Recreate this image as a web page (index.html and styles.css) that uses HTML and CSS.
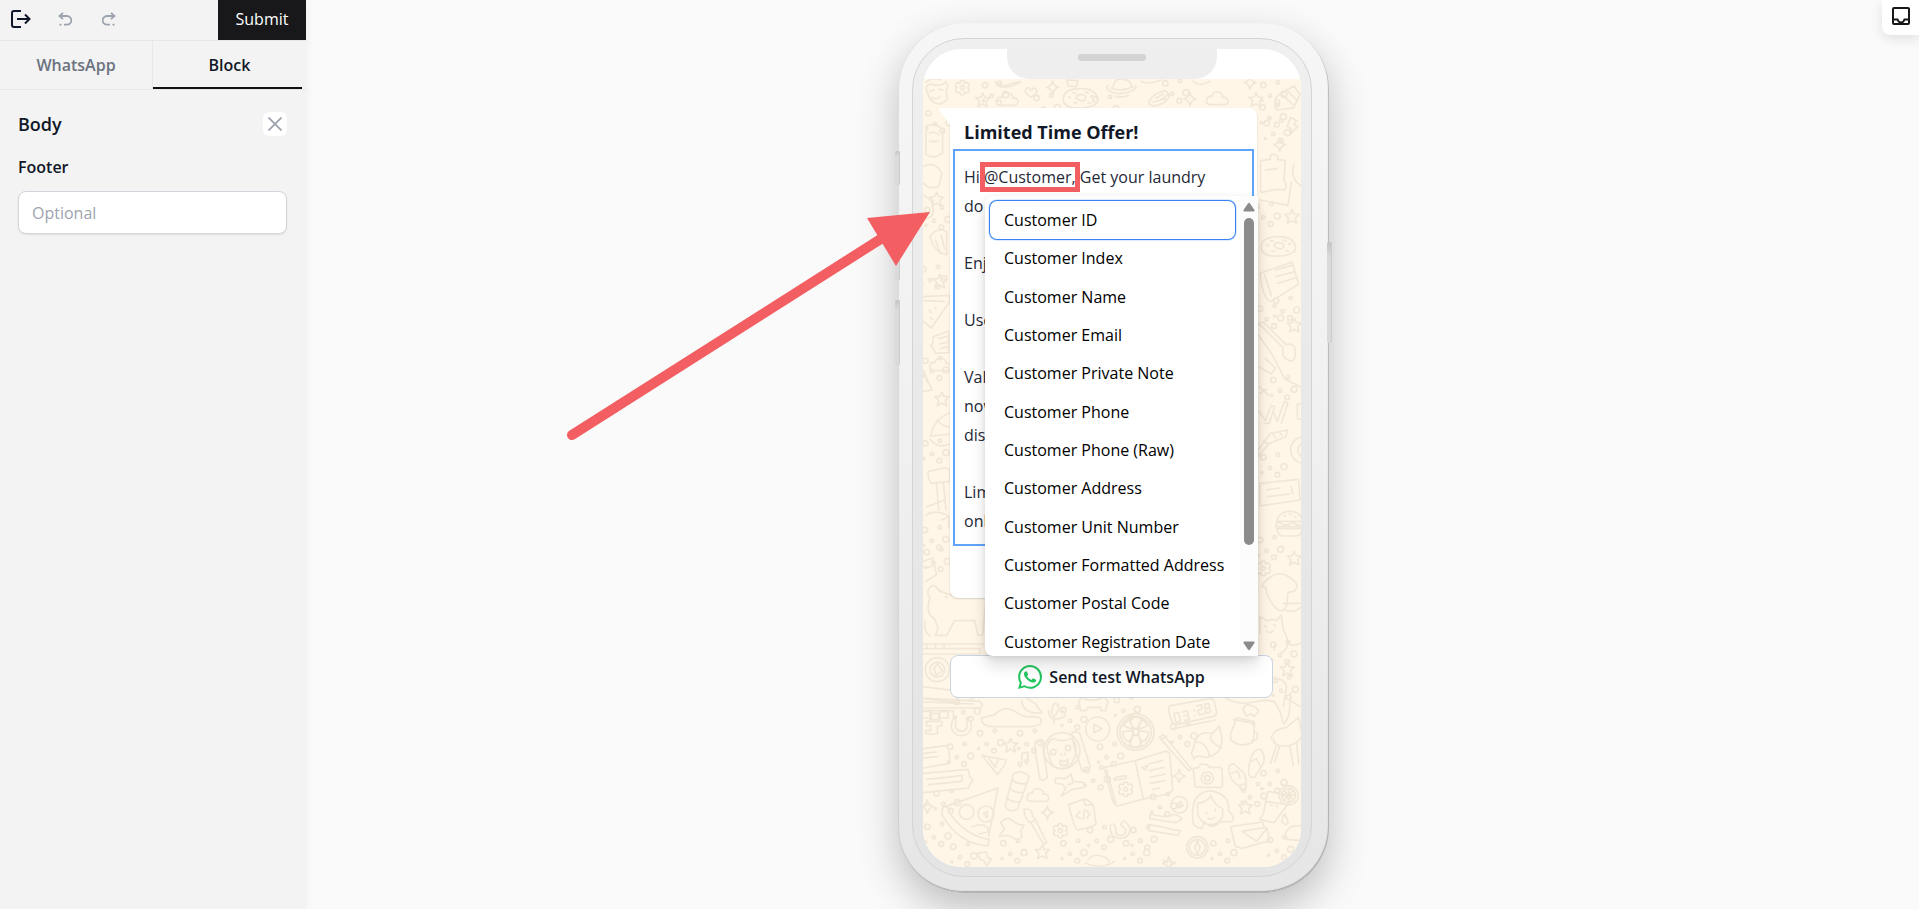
FILE: index.html
```html
<!DOCTYPE html>
<html lang="en">
<head>
    <meta charset="UTF-8">
    <meta name="viewport" content="width=device-width, initial-scale=1.0">
    <title>WhatsApp Template Editor</title>
    <link rel="stylesheet" href="styles.css">
</head>
<body>
    <aside class="sidebar">
        <div class="toolbar">
            <button class="icon-btn exit" aria-label="Exit">
                <svg width="20" height="18" viewBox="0 0 20 18" fill="none" stroke="currentColor" stroke-width="2"><path d="M10 1H3Q1 1 1 3v12q0 2 2 2h7M6 9h12M14 4.500l4.500 4.500-4.500 4.500"/></svg>
            </button>
            <button class="icon-btn" aria-label="Undo" disabled>
                <svg width="14" height="14" viewBox="0 0 14 14" fill="none" stroke="currentColor" stroke-width="1.800"><path d="M5 .8L1.500 4 5 7.200M1.500 4H9a4.300 4.300 0 0 1 0 8.700H6"/><path d="M1.500 12.700h2"/></svg>
            </button>
            <button class="icon-btn" aria-label="Redo" disabled>
                <svg width="14" height="14" viewBox="0 0 14 14" fill="none" stroke="currentColor" stroke-width="1.800"><path d="M9 .8L12.500 4 9 7.200M12.500 4H5a4.300 4.300 0 0 0 0 8.700h3"/><path d="M10.500 12.700h2"/></svg>
            </button>
            <button class="submit">Submit</button>
        </div>
        <nav class="tabs">
            <button class="tab">WhatsApp</button>
            <button class="tab active">Block</button>
        </nav>
        <section class="panel">
            <div class="panel-head">
                <h2>Body</h2>
                <button class="close" aria-label="Close">
                    <svg width="14" height="14" viewBox="0 0 14 14" stroke="currentColor" stroke-width="1.800"><path d="M.5.5l13 13M13.500.5l-13 13"/></svg>
                </button>
            </div>
            <label for="footer">Footer</label>
            <input id="footer" type="text" placeholder="Optional">
        </section>
    </aside>

    <main class="canvas">
        <div class="phone">
            <span class="side-btn mute"></span>
            <span class="side-btn vol-up"></span>
            <span class="side-btn vol-down"></span>
            <span class="side-btn power"></span>
            <div class="bezel">
                <div class="screen">
                    <div class="status">
                        <div class="notch"><span class="speaker"></span></div>
                    </div>
                    <div class="chat">
                        <svg class="doodles" viewBox="0 0 378 789" preserveAspectRatio="xMidYMin slice" aria-hidden="true">
                            <defs>
                                <path id="star" d="M0-21l6 13 15 1-11 11 4 16-14-8-14 8 4-16-11-11 15-1z"/>
                                <path id="spark" d="M0-20q3 17 18 20q-15 3-18 20q-3-17-18-20q15-3 18-20z"/>
                                <path id="flower" d="M-7-13q0-9 7-9t7 9q8-5 12 1t-3 12q7 6 3 12t-12 1q0 9-7 9t-7-9q-8 5-12-1t3-12q-7-6-3-12t12-1zM0-6a6 6 0 1 0 .1 0"/>
                                <path id="cloud" d="M-26 16q-14-2-10-15t15-9q4-18 20-13t12 14q18 2 17 13t-15 10z"/>
                                <path id="burger" d="M-38-8q6-30 40-30t36 30zM-40 0q10-8 20 0t20 0 20 0 20 0v8h-80zM-37 14h76q-2 22-20 22h-38q-16 0-18-22zM-15-26l3 2M2-30l3 2M17-22l3 2"/>
                                <path id="bolt" d="M-4-26L14-16 6-4l12 5-24 25 5-17-13-7z"/>
                                <path id="donut" d="M-52 4q-2-32 46-34t56 26-46 32-56-24zM-14-2q2-12 18-10t10 14-28-4zM-36-6l6 4M-24-18l8 2M14-20l8 4M30-6l6-4M-20 14l8-2M22 12l8 2M-52 6q6 18 30 22"/>
                                <g id="dots"><circle cx="-30" cy="-20" r="8"/><circle cx="14" cy="-28" r="5"/><circle cx="32" cy="8" r="9"/><circle cx="-10" cy="12" r="5"/><circle cx="-34" cy="26" r="3"/><circle cx="12" cy="32" r="7"/></g>
                            </defs>
                            <!-- top -->
                            <g transform="translate(-43 -69) scale(.3333)">
                                <path d="M140 240q-4-22 20-16t36-8q14 10 2 24l4 26q-14 20-34 14t-28-40zM150 244l12-4M176 238l12 2M156 262q12 10 24-2M138 216q20-16 44-6"/>
                                <use href="#flower" x="247" y="233"/><use href="#cloud" x="386" y="270"/><use href="#star" x="308" y="270"/><use href="#donut" x="602" y="266"/>
                                <path d="M452 262q-22-16-14-25t14 4q10-12 17-2t-17 23zM346 215q16 18 36 10t40-10M348 226q30 14 70-8M560 210l34 2-6 18-24-2z"/>
                                <use href="#spark" x="518" y="232"/><path d="M700 230q0-24 28-22t26 24M684 226q-10 10 12 20t50 0 20-18M694 234q28 14 64-4M704 258q18 8 42-2"/>
                                <path d="M806 282q4-28 50-40l12 12q-4 28-48 34zM818 276q26-2 44-22M828 264l22-12M784 214q20 12 60-4"/>
                                <use href="#spark" x="930" y="267"/><use href="#cloud" x="1016" y="268"/><use href="#star" x="1128" y="269"/><use href="#spark" x="1110" y="218"/>
                                <path d="M940 214q20 18 50 0M1190 300q-16-34 14-52l38-20 18 26-20 40zM1208 254l30 30M1224 244l26 26"/>
                                <use href="#dots" x="345" y="246"/><use href="#dots" x="676" y="288"/><use href="#dots" x="886" y="240"/><use href="#dots" x="1180" y="245"/><use href="#dots" x="500" y="284"/>
                                <use href="#dots" x="1178" y="312"/><use href="#bolt" x="1236" y="348"/><use href="#spark" x="1199" y="404"/><use href="#dots" x="1190" y="360"/>
                                <path d="M1142 452l30-4q-4-18 12-14t8 14l24 4-4 60q12 12 2 28l-26-2-46 10zM1156 480l34-4M1140 570l84 16 10-70M1242 464q-14 40 22 64"/>
                                <use href="#dots" x="1160" y="610"/><use href="#donut" x="1196" y="710"/><use href="#star" x="1236" y="620"/>
                                <path d="M138 350q24-16 50 8v70q-24 22-50 6zM148 370q14-8 28 4M150 394h26M132 470q30-20 54 20l-10 40q-30 10-44-10M132 556q38 20 24 62l-24 12"/>
                                <use href="#dots" x="175" y="330"/><use href="#star" x="170" y="568"/><use href="#dots" x="172" y="620"/>
                                <path d="M150 680q20-30 50-16v70q-36-4-50-54zM166 690l14 40M184 676l10 40"/>
                            </g>
                            <!-- middle -->
                            <g transform="translate(-43 191) scale(.3333)">
                                <use href="#star" x="180" y="34"/><use href="#dots" x="160" y="18"/>
                                <path d="M130 80l78-4v20l-54 78-24-20M132 92l60 2M148 120l6 8M164 112l4 4M152 144l6 4M160 200l46-16v64l-40 2-6-16-8-6 6-8zM176 206l30-8M178 222l28-6M182 236l24-6"/>
                                <use href="#cloud" x="186" y="286"/><use href="#dots" x="166" y="292"/><path d="M130 302l26 58-26 4M138 330l6 8"/>
                                <use href="#star" x="186" y="387"/><path d="M210 428q-50 20-58 70l58-6M150 508q24 30 58 14M172 450q14 20 36 20"/>
                                <use href="#dots" x="166" y="540"/><path d="M146 604l46-10q20-2 18 20v20l-56 6q-14-18-8-36zM170 640l6 80M190 638l8 82"/>
                                <path d="M1140 10l96-34 20 66-82 52q-24 0-34-84zM1154 14l20 64M1186 0l50-14M1188 20l54-14M1192 40l54-16"/>
                                <use href="#dots" x="1218" y="112"/><use href="#star" x="1243" y="166"/><use href="#dots" x="1170" y="136"/>
                                <path d="M1136 160l74 74q-8 26 14 36t22-22-28-24l-68-68zM1136 196l42 60 36 70 50 26M1136 290l38 22 12-18-30-28M1138 350l30 28M1140 370l20-12"/>
                                <use href="#dots" x="1210" y="350"/><path d="M1136 422l20 30 18-46 10 4-16 50h-16M1180 424l12 30 22-60 10 6-20 60M1252 404l14-4v50l-14-4z"/>
                                <path d="M1134 540l38-50 50-10-4 20-50 20-34 40zM1152 512l10 10M1180 494l8 12M1200 488l6 8"/><circle cx="1272" cy="540" r="40"/><circle cx="1278" cy="540" r="24"/>
                                <use href="#dots" x="1180" y="582"/><path d="M1140 640l116-12 4 62-120 18zM1160 660l40-6M1162 680l66-8M1234 650l4 20"/>
                            </g>
                            <!-- around the send button -->
                            <g transform="translate(-43 421) scale(.3333)">
                                <path d="M140 20l54-20M136 46q30-20 70 2M184 60l22-10v34M130 184l28-10 12 50-32 20M136 204l20-6"/><use href="#dots" x="165" y="110"/><use href="#dots" x="170" y="176"/>
                                <path d="M150 292q-14-16 0-30t26 10l34 12q40 18 70-6l20-30 20 18-6 70-6 70h-14l-10-44h-60l-24 44h-34l8-20-10-30q-30-12-14-64zM180 270l4 6M196 290l6 2M150 408q-22-18-14-44"/>
                                <path d="M130 432h180M130 446h170v16H130M140 434v12M166 434v12M192 434v12"/><circle cx="172" cy="509" r="36"/><circle cx="172" cy="509" r="22"/><path d="M162 504l10-12 16 20-20 14z"/>
                                <path d="M130 560l90 12 16 36-106-12M130 632h90v28M150 632v28M180 632v28"/><use href="#dots" x="260" y="625"/>
                                <use href="#burger" x="1228" y="72"/><use href="#dots" x="1170" y="140"/><use href="#star" x="1243" y="175"/><use href="#flower" x="1150" y="205"/>
                                <path d="M1152 248q36-40 70-20t28 30q2 20-26 18l-4 40q-14 30-36 4t-24-44-14-16z"/>
                                <path d="M1140 400v-50l20 12q20-8 30 0l14-18 6 46q30 50-8 70M1154 378l4 4M1182 374l4 4M1160 394q10 8 20-2"/>
                                <path d="M1210 310h50M1214 330q30 10 48-8M1186 430l-4 20M1220 424q14 20 42 6"/>
                                <use href="#star" x="1222" y="508"/><use href="#dots" x="1214" y="560"/><use href="#dots" x="1210" y="454"/><path d="M1180 540q30-10 40 20l-10 60M1230 600l30 20"/>
                                <use href="#dots" x="640" y="420"/><use href="#cloud" x="370" y="430"/>
                            </g>
                            <!-- bottom -->
                            <g transform="translate(-43 611) scale(.3333)">
                                <path d="M130 24l168 10q14 8 4 20H130M130 36l150 6M130 64h24v20h-24M154 70h22v18h-22M180 64h24v20h-24M140 94h46v14h-14v24h-34v-10h14v-14h-12z"/>
                                <path d="M228 82a30 30 0 1 0 32 0v16a18 18 0 1 1-32 0z"/><path d="M304 84l40-10q30-30 60-10t50 16q30-2 30 14t-40 16H340q-36 0-36-26zM426 30q0 44 60 38l-16-20M440 24l30 20"/>
                                <path d="M518 50q2-14 12-8t4 22l-10 16q-14-8-6-30zM506 62q0 30 30 24t12-24M522 88v14M596 34l12-14q6 12 32 10t32-10l12 16-8 26h-12l-4-10h-36l-6 10h-16z"/>
                                <circle cx="653" cy="117" r="36"/><path d="M642 102v26l24-12z"/><circle cx="767" cy="126" r="55"/><circle cx="767" cy="126" r="47"/><circle cx="767" cy="126" r="9"/>
                                <path d="M758 116l-8-30q16-10 34 0l-8 30zM758 136l-8 30q16 10 34 0l-8-30zM757 122l-30 4q4 24 20 30l14-22zM777 122l30 4q-4 24-20 30l-14-22zM755 117l-24-10 14-20 16 26zM779 117l24-10-14-20-16 26z"/>
                                <path d="M866 62q-2-14 10-16l114-20q12 0 14 14l6 26q0 12-14 14l-106 24q-12 0-16-14zM880 116l126-26"/>
                                <path d="M882 70l14-2 6 26-14 4zM908 66l14-3 2 12-13 3M924 75l4 14-14 3M942 60v3M944 76v3M950 48l14-4 2 13-12 4 4 14 14-4M974 42l12-2 6 26-14 4zM977 56l12-3"/>
                                <path d="M942 170q4-50 56-40l20-22 8 40q0 46-46 54l-28-4-10 8-8-16zM948 156q30-2 40 40M996 132q-16 20 28 42M1052 130l16-40 56 10-4 56q-36 20-68-6zM1060 90l12-6 50 10-4 12M1122 122q16 6 8 26l-14 4M1090 60q0-20 22-14t24 20l-14 14-8-8-14 6z"/>
                                <path d="M1040 26q40 20 82 10t62 0q20 30 24 56t20-24l4-60M1172 146q10-30 48-34l36-30 10 50M1180 146q0 18 22 22h20q34-8 44-30M1188 170l-16 50M1198 170l-14 46M1230 170l10 56M1250 160l6 60"/>
                                <circle cx="546" cy="182" r="54"/><path d="M508 200q-18-44 14-54 24 12 50 0 26 14 12 54-10 36-40 36t-36-36zM540 210q12 10 24-2v14q-12 10-24 0zM542 192l4 4M554 190l3 4M466 156q14-12 22 10l14 94q-4 14-22 8l-16-90zM576 128q16-8 24 4l30 96q-4 18-24 14l-24-72z"/><circle cx="520" cy="186" r="8"/><circle cx="564" cy="174" r="8"/>
                                <path d="M838 142l12-8 84 102-8 6zM860 138l-14 10M672 232l94-20 90-28q12 0 14 12l8 104q-10 16-60 20l-106 28q-12-6-16-24zM766 214l24 112M680 240l28 104M702 266q16-10 38-8l-2 8-34 4zM806 222l40-10M808 242l44-10M810 262l46-10M812 280l44-8M818 298l20-4M786 232l18-6-8 14z"/><use href="#flower" x="737" y="298"/>
                                <path d="M130 176l72-10q4 0 8 54l-80 14M130 190l40-4M130 204l44-4M130 250l134-12 6 24 10 8-10 12-4 12-136 14M140 268l60-6M146 284l100-10v-18l-46 6"/>
                                <path d="M306 196l72 14q4 6-26 44zM326 204l20 28 8-24M420 218q-10-4-4 8t10-8v-28l18-4v24q-12-2-8 8t10-8"/><use href="#star" x="392" y="166"/>
                                <path d="M400 252q24-16 48 8l-36 98q-26 12-36-10zM396 270q20 16 44 10M388 296q20 16 42 10M380 324q20 16 42 10"/><use href="#cloud" x="478" y="318"/>
                                <path d="M526 264l30 2 18-14 4 22 34 4v14l-34 6-34 20 14-26-14-10-18-2zM564 284l14-4M188 352q20-6 20 16 50 70 120 80l-4 20q-90-6-138-94zM196 350l158-56-28 146"/><circle cx="260" cy="366" r="22"/><circle cx="318" cy="372" r="24"/><path d="M310 372l12-8v20zM276 410q30-12 46 2l4 14-30 6M362 398q20-20 36-6t34 14l-10 16 4 18q-10 16-26 4t-34-6 8-20z"/>
                                <path d="M432 358q24-6 26 22l8 8 34 70-8 6-40-66q-18-6-20-40zM462 392l-10 6"/><use href="#spark" x="502" y="368"/><use href="#star" x="487" y="486"/><use href="#flower" x="541" y="422"/>
                                <path d="M566 344l50-18 24 18 8 56q-4 10-56 20-10-6-26-76zM612 328l4 18 24-2M600 364l-12 14 14 8M620 362l10 12-10 10M614 358l-4 28"/>
                                <path d="M700 402l8 12q-6 22 12 22t18-16l-16-16 8-12q20 12 20 28-4 28-34 24t-24-42M810 372q40 10 60 6 16-12 36 8-14 16-34 10l-62-10zM806 404q40 6 60 12t36 6l-8 14-86-14z"/><circle cx="898" cy="344" r="25"/><path d="M890 344l12-10v18zM888 350q14 8 22-6"/>
                                <path d="M940 236l16-4 6-10 20 2 6 8h30q10 0 8 14l2 38q0 10-14 8h-60q-10 0-10-14z"/><circle cx="982" cy="264" r="18"/><circle cx="982" cy="264" r="8"/><path d="M1046 234q4-14 16-12l24 22q14 6 12 44t-20 0l-14-10q-16-14-18-44zM1054 250l20-6 6 20M1126 182q14-10 22 4 10 26-2 40l-22 36q-20 4-18-22 4-44 20-58zM1114 214l16-8 10 22"/>
                                <path d="M940 400q-14-90 50-98 60 10 56 60 20 20 10 32l-38 2q-20 26-44 0l-8 20q-20-4-26-16M952 340q30-2 40-24 10 30 36 40v24q-12 24-36 24t-38-28zM980 368v4M1006 358v4M984 386q12 4 20-4"/>
                                <use href="#star" x="1096" y="352"/><path d="M1150 372l14-68 52 10 14 20-48 64-42-10zM1156 334l50 8M1172 344l4 3M1188 346l4 3"/><circle cx="1226" cy="316" r="29"/><circle cx="1226" cy="316" r="21"/><path d="M1226 296v40M1206 316h40M1212 302l28 28M1240 302l-28 28M1206 396q0-14 8-24 14 24 8 30t-16-6"/>
                                <path d="M1052 410l96-14 4 14M1052 410l14 60 14 2M1086 424l70-12q8 0 12 40l-84 24M1086 424l44 30 32-40M1216 432q10-30 50-24v44l-44-4z"/><circle cx="952" cy="472" r="32"/><circle cx="952" cy="472" r="24"/><path d="M952 452l8 20-8 22-8-22z"/>
                                <path d="M292 490l28-4 2 16 12 6-14 20-8-16-10-2zM624 510q14-20 40-12t22 18M616 518q20 12 46 10t42-14M130 350l12-6M850 510l10 8 8-16 4 16h14"/><use href="#spark" x="898" y="258"/><use href="#spark" x="866" y="520"/><use href="#spark" x="142" y="350"/>
                                <use href="#dots" x="330" y="150"/><use href="#dots" x="690" y="190"/><use href="#dots" x="580" y="80"/><use href="#dots" x="740" y="50"/><use href="#dots" x="240" y="190"/><use href="#dots" x="910" y="130"/><use href="#dots" x="650" y="260"/><use href="#dots" x="1120" y="310"/><use href="#dots" x="660" y="440"/><use href="#dots" x="768" y="480"/><use href="#dots" x="580" y="480"/><use href="#dots" x="172" y="430"/><use href="#dots" x="250" y="490"/><use href="#dots" x="400" y="480"/><use href="#dots" x="1030" y="480"/><use href="#dots" x="1200" y="470"/><use href="#dots" x="790" y="440"/><use href="#dots" x="1180" y="270"/><use href="#dots" x="200" y="330"/><use href="#dots" x="850" y="340"/><use href="#dots" x="450" y="150"/>
                            </g>
                        </svg>
                        <div class="bubble">
                            <svg class="tail" width="12" height="18" viewBox="0 0 12 18"><path d="M1 0h11v18L1 3Q-1 0 1 0z" fill="#fff"/></svg>
                            <h1>Limited Time Offer!</h1>
                            <div class="editor" contenteditable="true" role="textbox" aria-label="Message body" spellcheck="false">
                                <p>Hi <span class="mention">@Customer,</span> Get your laundry<br>do</p>
                                <p>Enj</p>
                                <p>Use</p>
                                <p>Val<br>now<br>dis</p>
                                <p>Lim<br>onl</p>
                            </div>
                            <div class="menu">
                                <div class="options" role="listbox" aria-label="Customer fields">
                                    <button class="option selected" role="option">Customer ID</button>
                                    <button class="option" role="option">Customer Index</button>
                                    <button class="option" role="option">Customer Name</button>
                                    <button class="option" role="option">Customer Email</button>
                                    <button class="option" role="option">Customer Private Note</button>
                                    <button class="option" role="option">Customer Phone</button>
                                    <button class="option" role="option">Customer Phone (Raw)</button>
                                    <button class="option" role="option">Customer Address</button>
                                    <button class="option" role="option">Customer Unit Number</button>
                                    <button class="option" role="option">Customer Formatted Address</button>
                                    <button class="option" role="option">Customer Postal Code</button>
                                    <button class="option" role="option">Customer Registration Date</button>
                                </div>
                                <div class="scrollbar" aria-hidden="true">
                                    <svg width="12" height="10" viewBox="0 0 12 10"><path d="M5 1.500q1-1.500 2 0l4.500 6.500q.5 1.500-1 1.500h-9q-1.500 0-1-1.500z" fill="#8b8b8b"/></svg>
                                    <span class="thumb"></span>
                                    <svg width="12" height="10" viewBox="0 0 12 10"><path d="M5 8.500q1 1.500 2 0l4.500-6.500q.5-1.500-1-1.500h-9q-1.500 0-1 1.500z" fill="#8b8b8b"/></svg>
                                </div>
                            </div>
                        </div>
                        <button class="send">
                            <svg width="24" height="24" viewBox="0 0 24 24" fill="#22c55e"><path d="M17.472 14.382c-.297-.149-1.758-.867-2.030-.967-.273-.099-.471-.148-.67.150-.197.297-.767.966-.940 1.164-.173.199-.347.223-.644.075-.297-.150-1.255-.463-2.390-1.475-.883-.788-1.480-1.761-1.653-2.059-.173-.297-.018-.458.130-.606.134-.133.298-.347.446-.520.149-.174.198-.298.298-.497.099-.198.050-.371-.025-.520-.075-.149-.669-1.612-.916-2.207-.242-.579-.487-.500-.669-.510-.173-.008-.371-.010-.570-.010-.198 0-.520.074-.792.372-.272.297-1.040 1.016-1.040 2.479 0 1.462 1.065 2.875 1.213 3.074.149.198 2.096 3.200 5.077 4.487.709.306 1.262.489 1.694.625.712.227 1.360.195 1.871.118.571-.085 1.758-.719 2.006-1.413.248-.694.248-1.289.173-1.413-.074-.124-.272-.198-.570-.347M12.050 21.785h-.004a9.870 9.870 0 0 1-5.031-1.378l-.361-.214-3.741.982.998-3.648-.235-.374a9.860 9.860 0 0 1-1.510-5.260c.001-5.450 4.436-9.884 9.888-9.884 2.640 0 5.122 1.030 6.988 2.898a9.825 9.825 0 0 1 2.893 6.994c-.003 5.450-4.437 9.884-9.885 9.884M20.463 3.488A11.815 11.815 0 0 0 12.050 0C5.495 0 .160 5.335.157 11.892c0 2.096.547 4.142 1.588 5.945L.057 24l6.305-1.654a11.882 11.882 0 0 0 5.683 1.448h.005c6.554 0 11.890-5.335 11.893-11.893a11.821 11.821 0 0 0-3.480-8.413z"/></svg>
                            Send test WhatsApp
                        </button>
                    </div>
                </div>
            </div>
            <svg class="arrow" width="370" height="240" viewBox="0 0 370 240" aria-hidden="true">
                <path d="M10 230L325 30" stroke="#f25e62" stroke-width="10" stroke-linecap="round"/>
                <path d="M368 7l-63 6 29 48z" fill="#f25e62"/>
            </svg>
        </div>
    </main>

    <button class="inbox" aria-label="Inbox">
        <svg width="18" height="18" viewBox="0 0 18 18" fill="none" stroke="currentColor" stroke-width="2"><rect x="1" y="1" width="16" height="16" rx="1"/><path d="M1 12.500h4.500q1 3 3.500 3t3.500-3H17"/></svg>
    </button>
</body>
</html>
```
FILE: styles.css
```css
* {
    box-sizing: border-box;
}

body {
    margin: 0;
    min-height: 100vh;
    display: flex;
    background: #fafafa;
    color: #111827;
    font-family: "Segoe UI", "Open Sans", "Noto Sans", sans-serif;
    font-size: 16px;
}

button,
input {
    font: inherit;
    color: inherit;
}

button {
    border: none;
    background: none;
    padding: 0;
    cursor: pointer;
}

svg {
    display: block;
}

/* Sidebar */
.sidebar {
    position: relative;
    z-index: 1;
    width: 306px;
    flex: none;
    background: #f3f3f3;
    box-shadow: 0 0 10px rgba(0, 0, 0, 0.05);
}

.toolbar {
    display: flex;
    align-items: center;
    height: 41px;
    padding-left: 11px;
    gap: 30px;
    border-bottom: 1px solid #e5e7eb;
}

.icon-btn {
    color: #9ca3af;
    margin-bottom: 2px;
}

.exit {
    color: #0f172a;
    margin-right: -3px;
}

.submit {
    margin-left: auto;
    align-self: stretch;
    width: 88px;
    padding-bottom: 2px;
    background: #18181b;
    color: #fff;
}

.tabs {
    display: grid;
    grid-template-columns: 1fr 1fr;
    height: 49px;
    border-bottom: 1px solid #e5e7eb;
}

.tab {
    color: #6b7280;
    font-weight: 600;
    border-right: 1px solid #e5e7eb;
}

.tab.active {
    color: #111827;
    border-right: none;
    background: linear-gradient(#111114, #111114) left bottom / calc(100% - 4px) 2px no-repeat;
}

.panel {
    padding: 22px 19px 0 18px;
}

.panel-head {
    display: flex;
    justify-content: space-between;
    align-items: center;
    height: 24px;
}

.panel h2 {
    margin: 0;
    font-size: 18px;
    font-weight: 600;
}

.close {
    display: flex;
    align-items: center;
    justify-content: center;
    width: 24px;
    height: 24px;
    border-radius: 6px;
    background: #fff;
    color: #9ca3af;
}

.panel label {
    display: block;
    margin: 19px 0 12px;
    line-height: 24px;
    font-weight: 600;
}

.panel input {
    width: 100%;
    height: 43px;
    padding: 0 13px;
    border: 1px solid #d1d5db;
    border-radius: 8px;
    background: #fff;
    box-shadow: 0 1px 2px rgba(0, 0, 0, 0.08);
}

.panel input::placeholder {
    color: #9ca3af;
}

/* Phone */
.canvas {
    flex: 1;
    display: flex;
    justify-content: center;
    padding: 23px 0 16px 2px;
    overflow: hidden;
}

.phone {
    position: relative;
    display: flex;
    width: 431px;
    padding: 15px 17px 15px 14px;
    border-radius: 66px;
    background: linear-gradient(#f6f6f6, #f0f0f0 50%, #e6e6e6);
    border-bottom: 1px solid #b5b5b5;
    box-shadow: 0 16px 40px rgba(0, 0, 0, 0.24), inset -1px -1px 1px rgba(0, 0, 0, 0.25), inset 1px 0 1px rgba(0, 0, 0, 0.1);
}

.side-btn {
    position: absolute;
    left: -3px;
    width: 5px;
    border-radius: 2px;
    background: linear-gradient(#c4c4c4, #dadada 15%, #dadada);
    box-shadow: inset -1px 0 #ccc;
}

.mute {
    top: 128px;
    height: 34px;
}

.vol-up {
    top: 192px;
    height: 65px;
}

.vol-down {
    top: 277px;
    height: 65px;
}

.power {
    left: auto;
    right: -3px;
    top: 219px;
    height: 101px;
}

.bezel {
    flex: 1;
    display: flex;
    padding: 10px 10px 9px;
    border: 1px solid #d4d4d4;
    border-radius: 52px;
    background: linear-gradient(#f0f0f0, #e9e9e9 40%, #e4e4e4);
}

.screen {
    flex: 1;
    display: flex;
    flex-direction: column;
    border-radius: 38px;
    background: #fff;
    overflow: hidden;
}

.status {
    display: flex;
    justify-content: center;
    height: 30px;
}

.notch {
    display: flex;
    justify-content: center;
    width: 210px;
    padding-top: 5px;
    border-radius: 0 0 22px 22px;
    background: #eee;
}

.speaker {
    width: 68px;
    height: 7px;
    border-radius: 3px;
    background: #d4d4d4;
}

.chat {
    position: relative;
    flex: 1;
    padding: 29px 28px 0 27px;
    background: #fff6e8;
}

.doodles {
    position: absolute;
    inset: 0;
    width: 100%;
    height: 100%;
    fill: none;
    stroke: #f0e7d7;
    stroke-width: 5;
    stroke-linejoin: round;
    stroke-linecap: round;
}

/* Message */
.bubble {
    position: relative;
    z-index: 1;
    margin-right: 16px;
    padding: 0 3px 52px;
    border-radius: 0 8px 8px 8px;
    background: #fff;
    box-shadow: 0 1px 2px rgba(0, 0, 0, 0.15);
}

.tail {
    position: absolute;
    top: 0;
    left: -11px;
}

.bubble h1 {
    margin: 0;
    padding: 10px 11px 2px;
    font-size: 18px;
    line-height: 29px;
    font-weight: 700;
}

.editor {
    display: flex;
    flex-direction: column;
    gap: 28px;
    padding: 12px 9px 8px;
    border: 2px solid #60a5fa;
    line-height: 29px;
    color: #1f2937;
    white-space: nowrap;
    outline: none;
}

.editor p {
    margin: 0;
}

.mention {
    outline: 5px solid #f25e62;
    outline-offset: -1px;
}

/* Field menu */
.menu {
    position: absolute;
    top: 88px;
    left: 35px;
    right: -1px;
    height: 460px;
    display: flex;
    border-radius: 8px 0 0 8px;
    background: #fff;
    box-shadow: 0 10px 16px rgba(0, 0, 0, 0.12), 0 2px 6px rgba(0, 0, 0, 0.1);
    overflow: hidden;
}

.options {
    flex: 1;
    min-width: 0;
    display: grid;
    grid-template-columns: minmax(0, 1fr);
    grid-template-rows: repeat(12, 1fr);
    height: 470px;
    padding: 5px;
    color: #000;
}

.option {
    padding: 0 0 0 14px;
    border-radius: 7px;
    text-align: left;
    white-space: nowrap;
}

.option.selected {
    box-shadow: 0 0 0 1px #3b82f6, 0 0 0 2px #dbeafe;
}

.scrollbar {
    flex: none;
    display: flex;
    flex-direction: column;
    align-items: center;
    width: 18px;
    padding: 6px 0 5px;
    background: #fcfcfc;
}

.thumb {
    width: 10px;
    height: 327px;
    margin: 6px 0 auto;
    border-radius: 5px;
    background: #8b8b8b;
}

.send {
    position: relative;
    display: flex;
    align-items: center;
    justify-content: center;
    gap: 7px;
    width: 100%;
    height: 43px;
    margin-top: 57px;
    border: 1px solid #cbd5e1;
    border-radius: 8px;
    background: #fff;
    font-weight: 600;
}

/* Pointer towards the mention */
.arrow {
    position: absolute;
    top: 182px;
    left: -336px;
    z-index: 2;
    fill: none;
}

.inbox {
    position: absolute;
    top: 0;
    right: 0;
    display: flex;
    padding: 7px 9px 10px 10px;
    border-radius: 0 0 0 8px;
    background: #fff;
    color: #18181b;
    box-shadow: 0 4px 12px rgba(0, 0, 0, 0.1);
}
```
